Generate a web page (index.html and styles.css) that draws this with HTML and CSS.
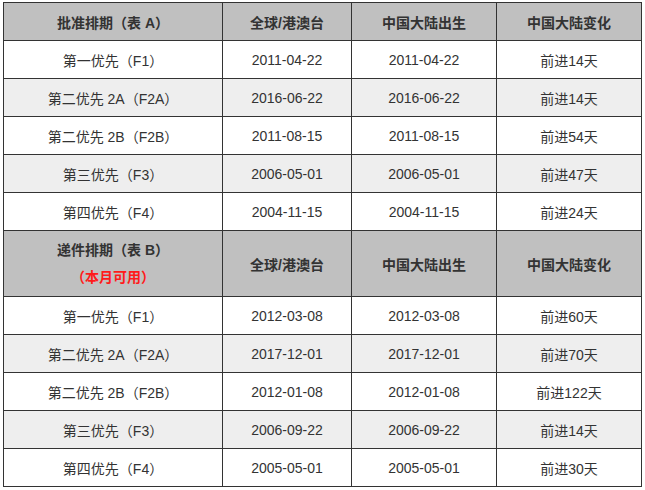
FILE: index.html
```html
<!DOCTYPE html>
<html lang="zh-CN">
<head>
<meta charset="utf-8">
<link rel="stylesheet" href="styles.css">
</head>
<body>
<div class="wrap">
<table class="vb">
  <colgroup>
    <col class="c1"><col class="c2"><col class="c3"><col class="c4">
  </colgroup>
  <tr class="head">
    <th>批准排期（表 A）</th><th>全球/港澳台</th><th>中国大陆出生</th><th>中国大陆变化</th>
  </tr>
  <tr><td>第一优先（F1）</td><td>2011-04-22</td><td>2011-04-22</td><td>前进14天</td></tr>
  <tr class="alt"><td>第二优先 2A（F2A）</td><td>2016-06-22</td><td>2016-06-22</td><td>前进14天</td></tr>
  <tr><td>第二优先 2B（F2B）</td><td>2011-08-15</td><td>2011-08-15</td><td>前进54天</td></tr>
  <tr class="alt"><td>第三优先（F3）</td><td>2006-05-01</td><td>2006-05-01</td><td>前进47天</td></tr>
  <tr><td>第四优先（F4）</td><td>2004-11-15</td><td>2004-11-15</td><td>前进24天</td></tr>
  <tr class="head tall">
    <th><span class="line">递件排期（表 B）</span><span class="line red">（本月可用）</span></th><th>全球/港澳台</th><th>中国大陆出生</th><th>中国大陆变化</th>
  </tr>
  <tr><td>第一优先（F1）</td><td>2012-03-08</td><td>2012-03-08</td><td>前进60天</td></tr>
  <tr class="alt"><td>第二优先 2A（F2A）</td><td>2017-12-01</td><td>2017-12-01</td><td>前进70天</td></tr>
  <tr><td>第二优先 2B（F2B）</td><td>2012-01-08</td><td>2012-01-08</td><td>前进122天</td></tr>
  <tr class="alt"><td>第三优先（F3）</td><td>2006-09-22</td><td>2006-09-22</td><td>前进14天</td></tr>
  <tr><td>第四优先（F4）</td><td>2005-05-01</td><td>2005-05-01</td><td>前进30天</td></tr>
</table>
</div>
</body>
</html>
```
FILE: styles.css
```css
html, body {
  margin: 0;
  padding: 0;
  background: #ffffff;
}
.wrap {
  padding: 2px 0 0 3px;
}
.vb {
  border-collapse: collapse;
  table-layout: fixed;
  width: 639px;
  font-family: "Liberation Sans", "Noto Sans CJK SC", sans-serif;
  font-size: 14px;
  color: #333333;
}
.c1 { width: 219px; }
.c2 { width: 129px; }
.c3 { width: 145px; }
.c4 { width: 145px; }
.vb th, .vb td {
  border: 1px solid #333333;
  padding: 0;
  height: 37px;
  text-align: center;
  vertical-align: middle;
}
.vb td { font-weight: normal; }
.head th {
  background: #c0c0c0;
  font-weight: bold;
  color: #333333;
}
.alt td {
  background: #eeeeee;
}
.tall th {
  height: 65px;
}
.line {
  display: block;
  line-height: 27px;
}
.red {
  color: #ff1a1a;
}
```
